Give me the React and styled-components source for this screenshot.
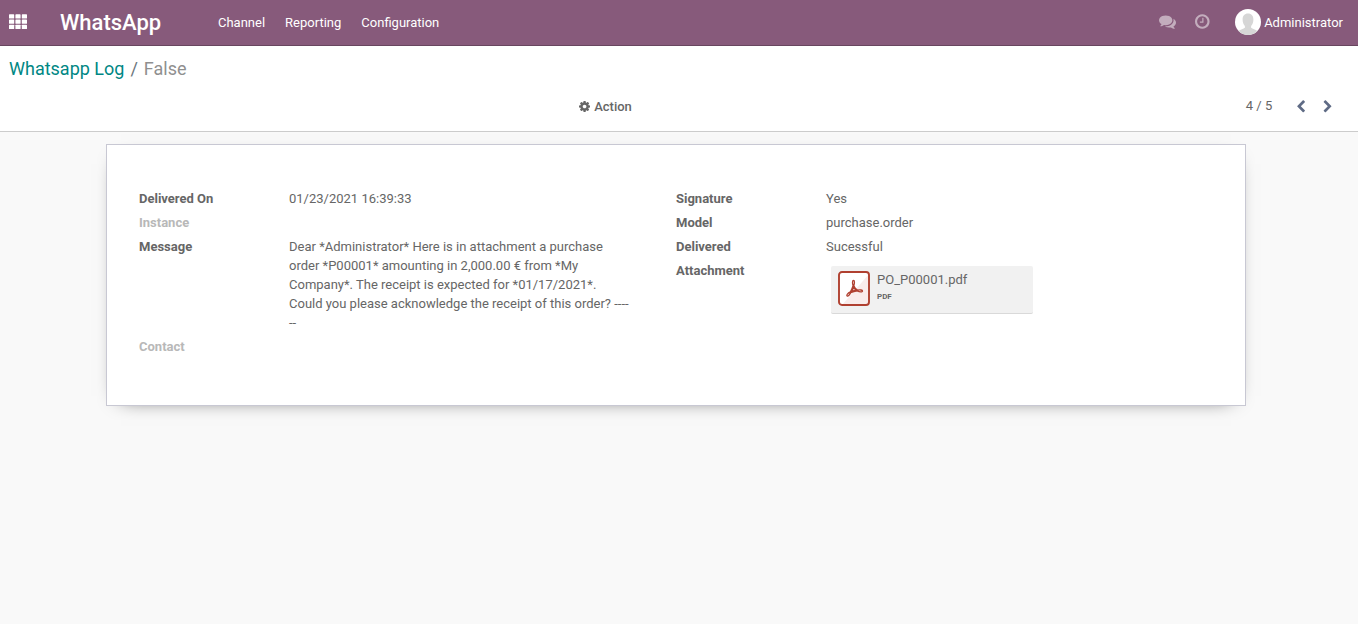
import React from "react";
import styled, { createGlobalStyle } from "styled-components";

const Global = createGlobalStyle`
  *, *::before, *::after { box-sizing: border-box; }
  body {
    margin: 0;
    background: #f9f9f9;
    color: #666666;
    font: 400 13px/19px Roboto, "Open Sans", sans-serif;
  }
  a { color: inherit; text-decoration: none; }
`;

const Page = styled.div`
  min-height: 624px;
  display: flex;
  flex-direction: column;
`;

const Navbar = styled.header`
  height: 46px;
  display: flex;
  align-items: center;
  padding: 0 15px 1px 9px;
  background: #875a7b;
  border-bottom: 1px solid #68465f;
  color: #fff;
`;

const Brand = styled.a`
  margin-left: 33px;
  width: 158px;
  padding-top: 2px;
  font-size: 22px;
  line-height: 42px;
  font-weight: 500;
`;

const Menu = styled.nav`
  display: flex;
  flex: 1;
  gap: 20px;
`;

const MenuItem = styled.a`
  white-space: nowrap;
`;

const Systray = styled.div`
  display: flex;
  align-items: center;
`;

const TrayIcon = styled.a`
  display: flex;
  margin-right: ${(p) => p.$gap}px;
  padding-bottom: 2px;
  color: rgba(255, 255, 255, 0.5);
`;

const User = styled.a`
  display: flex;
  align-items: center;
  gap: 3px;
`;

const ControlPanel = styled.section`
  height: 86px;
  padding: 11px 25px 0 9px;
  background: #fff;
  border-bottom: 1px solid #cccccc;
`;

const Breadcrumb = styled.div`
  display: flex;
  font-size: 18px;
  line-height: 24px;
`;

const Crumb = styled.a`
  color: ${(p) => (p.$active ? "#8f8f8f" : "#008784")};
`;

const Slash = styled.span`
  padding: 0 6px;
  color: #6c757d;
`;

const Controls = styled.div`
  display: grid;
  grid-template-columns: 570px 1fr auto;
  align-items: center;
  height: 28px;
  margin-top: 11px;
`;

const ActionButton = styled.a`
  grid-column: 2;
  display: flex;
  align-items: center;
  gap: 4px;
  font-weight: 500;
`;

const Pager = styled.div`
  display: flex;
  align-items: center;
`;

const PagerCount = styled.span`
  margin-right: 23.5px;
  padding-bottom: 2px;
`;

const PagerButton = styled.a`
  display: flex;
  margin-right: ${(p) => p.$gap || 0}px;
  padding-top: 1px;
  color: #5f6b85;
`;

const Sheet = styled.main`
  width: 1140px;
  height: 262px;
  margin: 12px 0 0 106px;
  padding: 44px 32px 0;
  display: grid;
  grid-template-columns: 537px 1fr;
  background: #fff;
  border: 1px solid #c8c8d3;
  box-shadow: 0 5px 20px -15px #000;
`;

const Group = styled.dl`
  margin: 0;
`;

const Field = styled.div`
  display: grid;
  grid-template-columns: 150px 345px;
  margin-bottom: 5px;
`;

const Label = styled.dt`
  font-weight: 700;
  color: ${(p) => (p.$empty ? "#b8b8b8" : "#666666")};
`;

const Value = styled.dd`
  margin: 0;
  min-height: 19px;
`;

const AttachmentValue = styled(Value)`
  padding: 5px 0 0 5px;
`;

const MessageLine = styled.span`
  display: block;
  white-space: nowrap;
`;

const Attachment = styled.a`
  display: flex;
  width: 202px;
  height: 48px;
  padding: 5px 7px 0;
  gap: 7px;
  background: #f1f1f1;
  border-bottom: 1px solid #d9d9d9;
  border-radius: 2px;
`;

const AttachmentInfo = styled.div`
  display: flex;
  flex-direction: column;
`;

const FileName = styled.span`
  line-height: 18px;
`;

const FileType = styled.span`
  font-size: 8px;
  font-weight: 700;
  line-height: 16px;
`;

const Glyph = ({ size, units, d }) => (
  <svg width={(size * units) / 1792} height={size} viewBox={`0 0 ${units} 1792`} fill="currentColor">
    <path d={d} />
  </svg>
);

const COMMENTS =
  "M1408 768q0 139-94 257t-256.5 186.5-353.5 68.5q-86 0-176-16-124 88-278 128-36 9-86 16h-3q-11 0-20.5-8t-11.5-21q-1-3-1-6.5t.5-6.5 2-6l2.5-5 3.5-5.5 4-5 4.5-5 4-4.5q5-6 23-25t26-29.5 22.5-29 25-38.5 20.5-44q-124-72-195-177t-71-224q0-139 94-257t256.5-186.5 353.5-68.5 353.5 68.5 256.5 186.5 94 257zm384 256q0 120-71 224.5t-195 176.5q10 24 20.5 44t25 38.5 22.5 29 26 29.5 23 25q1 1 4 4.5t4.5 5 4 5 3.5 5.5l2.5 5 2 6 .5 6.5-1 6.5q-3 14-13 22t-22 7q-50-7-86-16-154-40-278-128-90 16-176 16-271 0-472-132 58 4 88 4 161 0 309-45t264-129q125-92 192-212t67-254q0-77-23-152 129 71 204 178t75 230z";
const CLOCK =
  "M896 544v448q0 14-9 23t-23 9h-320q-14 0-23-9t-9-23v-64q0-14 9-23t23-9h224v-352q0-14 9-23t23-9h64q14 0 23 9t9 23zm416 352q0-148-73-273t-198-198-273-73-273 73-198 198-73 273 73 273 198 198 273 73 273-73 198-198 73-273zm224 0q0 209-103 385.5t-279.5 279.5-385.5 103-385.5-103-279.5-279.5-103-385.5 103-385.5 279.5-279.5 385.5-103 385.5 103 279.5 279.5 103 385.5z";
const COG =
  "M1024 896q0-106-75-181t-181-75-181 75-75 181 75 181 181 75 181-75 75-181zm512-109v222q0 12-8 23t-20 13l-185 28q-19 54-39 91 35 50 107 138 10 12 10 25t-9 23q-27 37-99 108t-94 71q-12 0-26-9l-138-108q-44 23-91 38-16 136-29 186-7 28-36 28h-222q-14 0-24.5-8.5t-11.5-21.5l-28-184q-49-16-90-37l-141 107q-10 9-25 9-14 0-25-11-126-114-165-168-7-10-7-23 0-12 8-23 15-21 51-66.5t54-70.5q-27-50-41-99l-183-27q-13-2-21-12.5t-8-23.5v-222q0-12 8-23t19-13l186-28q14-46 39-92-40-57-107-138-10-12-10-24 0-10 9-23 26-36 98.5-107.5t94.5-71.5q13 0 26 10l138 107q44-23 91-38 16-136 29-186 7-28 36-28h222q14 0 24.5 8.5t11.5 21.5l28 184q49 16 90 37l142-107q9-9 24-9 13 0 25 10 129 119 165 170 7 8 7 22 0 12-8 23-15 21-51 66.5t-54 70.5q26 50 41 98l183 28q13 2 21 12.5t8 23.5z";
const LEFT =
  "M1171 301l-531 531 531 531q19 19 19 45t-19 45l-166 166q-19 19-45 19t-45-19l-742-742q-19-19-19-45t19-45l742-742q19-19 45-19t45 19l166 166q19 19 19 45t-19 45z";
const RIGHT =
  "M1107 877l-742 742q-19 19-45 19t-45-19l-166-166q-19-19-19-45t19-45l531-531-531-531q-19-19-19-45t19-45l166-166q19-19 45-19t45 19l742 742q19 19 19 45t-19 45z";

const AppsIcon = () => (
  <svg width="18" height="16" viewBox="0 0 18 16" fill="#fff">
    {[0.3, 5.5, 10.7].map((y) =>
      [0, 6.4, 12.8].map((x) => <rect key={`${x}-${y}`} x={x} y={y} width="5.2" height="4.3" rx="0.6" />)
    )}
  </svg>
);

const Avatar = () => (
  <svg width="26" height="26" viewBox="0 0 26 26">
    <defs>
      <clipPath id="avatar-clip">
        <circle cx="13" cy="13" r="13" />
      </clipPath>
    </defs>
    <g clipPath="url(#avatar-clip)">
      <rect width="26" height="26" fill="#fff" />
      <path
        d="M13 4.6c3.5 0 5.4 2.4 5.4 6 0 2.9-.9 5-2.3 6.4v1.7c1.3 1.3 4.6 1.4 6.3 3.3V26H3.6v-4c1.7-1.9 5-2 6.3-3.3v-1.7c-1.400-1.400-2.300-3.500-2.300-6.400 0-3.600 1.900-6 5.400-6z"
        fill="#d6d6d6"
      />
    </g>
  </svg>
);

const PdfIcon = () => (
  <svg width="32" height="35" viewBox="0 0 32 35">
    <rect x="1" y="1" width="30" height="33" rx="3" fill="#fff" />
    <path d="M31 3v28a3 3 0 0 1-3 3H4z" fill="#f9eceb" />
    <rect x="1" y="1" width="30" height="33" rx="3" fill="none" stroke="#b04030" strokeWidth="1.9" />
    <path
      d="M15.5 9.5c1.3 0 1.1 2.7.3 5.2 1 2.3 2.3 3.6 3.7 4.4 2.7-.4 5-.2 5 .9 0 1.5-2.9.9-5.3-.2-2.6.4-4.6 1-6.4 1.8-1.4 2.5-2.8 4-3.7 3.3-1-.9.7-2.7 3.3-4 1.1-2.1 2-4.2 2.7-6.2-.8-2.5-.9-5.2.4-5.2zM15.5 16.5c-.5 1.4-1 2.6-1.7 3.9 1.5-.5 2.9-.9 4.3-1.2-1-.8-1.9-1.7-2.6-2.7z"
      fill="none"
      stroke="#b04030"
      strokeWidth="1.3"
      strokeLinejoin="round"
    />
  </svg>
);

const MESSAGE = [
  "Dear *Administrator* Here is in attachment a purchase",
  "order *P00001* amounting in 2,000.00 € from *My",
  "Company*. The receipt is expected for *01/17/2021*.",
  "Could you please acknowledge the receipt of this order? ----",
  "--",
];

export default function App() {
  return (
    <Page>
      <Global />
      <Navbar>
        <AppsIcon />
        <Brand>WhatsApp</Brand>
        <Menu>
          <MenuItem>Channel</MenuItem>
          <MenuItem>Reporting</MenuItem>
          <MenuItem>Configuration</MenuItem>
        </Menu>
        <Systray>
          <TrayIcon $gap={19}><Glyph size={17} units={1792} d={COMMENTS} /></TrayIcon>
          <TrayIcon $gap={25.5}><Glyph size={17} units={1536} d={CLOCK} /></TrayIcon>
          <User>
            <Avatar />
            Administrator
          </User>
        </Systray>
      </Navbar>
      <ControlPanel>
        <Breadcrumb>
          <Crumb>Whatsapp Log</Crumb>
          <Slash>/</Slash>
          <Crumb $active>False</Crumb>
        </Breadcrumb>
        <Controls>
          <ActionButton>
            <Glyph size={13} units={1536} d={COG} />
            Action
          </ActionButton>
          <Pager>
            <PagerCount>4 / 5</PagerCount>
            <PagerButton $gap={18}><Glyph size={13.5} units={1280} d={LEFT} /></PagerButton>
            <PagerButton><Glyph size={13.5} units={1280} d={RIGHT} /></PagerButton>
          </Pager>
        </Controls>
      </ControlPanel>
      <Sheet>
        <Group>
          <Field>
            <Label>Delivered On</Label>
            <Value>01/23/2021 16:39:33</Value>
          </Field>
          <Field>
            <Label $empty>Instance</Label>
            <Value />
          </Field>
          <Field>
            <Label>Message</Label>
            <Value>
              {MESSAGE.map((line) => (
                <MessageLine key={line}>{line}</MessageLine>
              ))}
            </Value>
          </Field>
          <Field>
            <Label $empty>Contact</Label>
            <Value />
          </Field>
        </Group>
        <Group>
          <Field>
            <Label>Signature</Label>
            <Value>Yes</Value>
          </Field>
          <Field>
            <Label>Model</Label>
            <Value>purchase.order</Value>
          </Field>
          <Field>
            <Label>Delivered</Label>
            <Value>Sucessful</Value>
          </Field>
          <Field>
            <Label>Attachment</Label>
            <AttachmentValue>
              <Attachment>
                <PdfIcon />
                <AttachmentInfo>
                  <FileName>PO_P00001.pdf</FileName>
                  <FileType>PDF</FileType>
                </AttachmentInfo>
              </Attachment>
            </AttachmentValue>
          </Field>
        </Group>
      </Sheet>
    </Page>
  );
}
